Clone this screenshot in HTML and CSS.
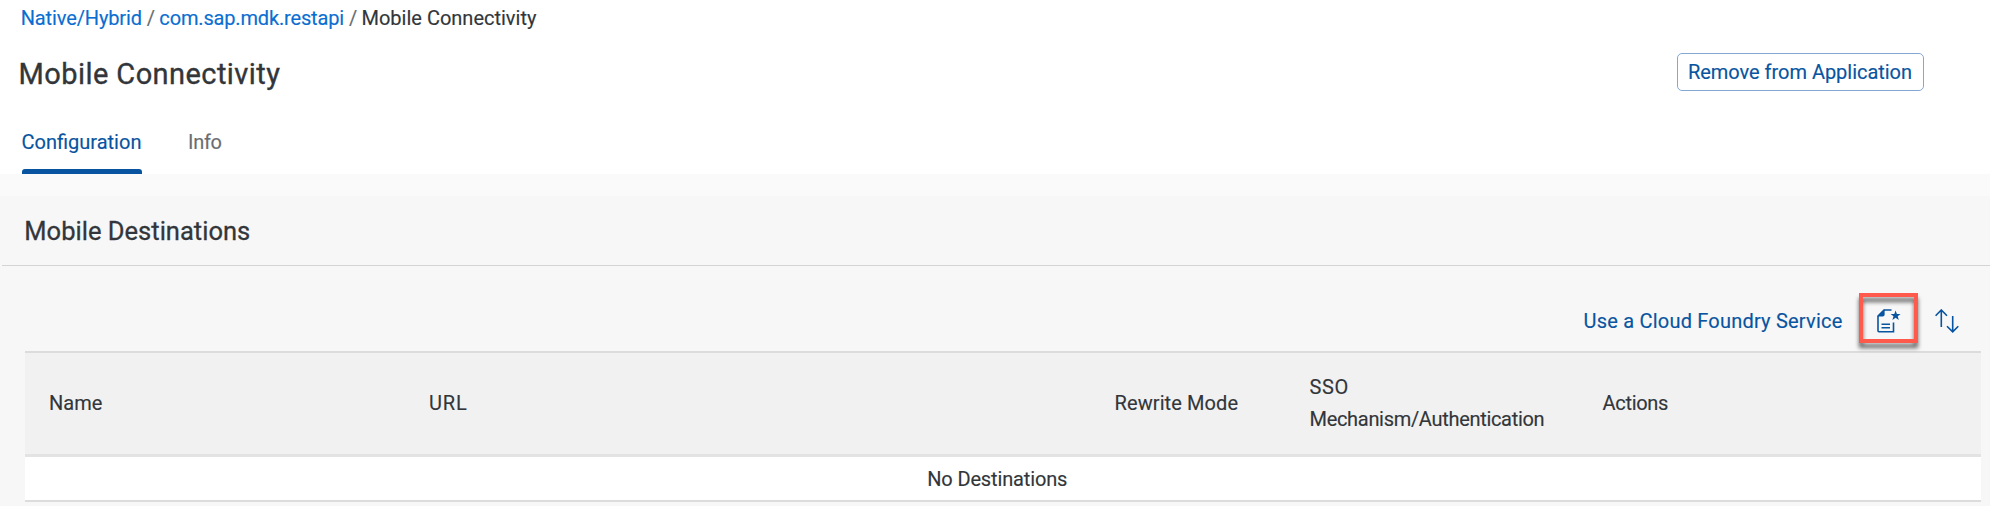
FILE: index.html
```
<!DOCTYPE html>
<html lang="en">
<head>
<meta charset="utf-8">
<title>Mobile Connectivity</title>
<link rel="stylesheet" href="styles.css">
</head>
<body>
<header class="page-header">
  <nav class="crumbs">
    <a class="crumb-native">Native/Hybrid</a><span class="sep">/</span><a class="crumb-app">com.sap.mdk.restapi</a><span class="sep">/</span><span>Mobile Connectivity</span>
  </nav>
  <div class="title-row">
    <h1 class="title">Mobile Connectivity</h1>
    <button class="remove">Remove from Application</button>
  </div>
  <div class="tabs">
    <a class="tab active">Configuration</a>
    <a class="tab info">Info</a>
  </div>
</header>
<main class="section">
  <h2 class="section-title">Mobile Destinations</h2>
  <div class="toolbar">
    <a class="cloud">Use a Cloud Foundry Service</a>
    <span class="create">
      <svg class="icon" viewBox="0 0 24 24" width="24" height="24">
        <path d="M14.5 1H7L1 7V21.8Q1 22.8 2 22.8H16.5V13.6" fill="none" stroke="currentColor" stroke-width="1.6"/>
        <path d="M7.6 .3V5.4Q7.6 7.4 5.6 7.4H.3z" fill="currentColor"/>
        <path d="M4.5 15.3H13M4.5 18.8H13" fill="none" stroke="currentColor" stroke-width="1.5"/>
        <path d="M18.6 1.6l1.3 3.4h3.7l-2.9 2.3 1.1 3.7-3.2-2.2-3.2 2.2 1.1-3.7-2.9-2.3h3.7z" fill="currentColor"/>
      </svg>
      <span class="highlight"></span>
    </span>
    <svg class="icon sort" viewBox="0 0 24 24" width="24" height="24">
      <path d="M.6 6.8L6.3 1 12 6.8M6.3 1V18M12 17.2L17.7 22.9l5.6-5.7M17.7 23V7" fill="none" stroke="currentColor" stroke-width="1.6"/>
    </svg>
  </div>
  <div class="table">
    <div class="head">
      <span>Name</span>
      <span class="url">URL</span>
      <span class="mode">Rewrite Mode</span>
      <span><span class="sso">SSO</span><br><span class="mech">Mechanism/Authentication</span></span>
      <span class="actions">Actions</span>
    </div>
    <div class="empty">No Destinations</div>
  </div>
</main>
</body>
</html>
```
FILE: styles.css
```
* { box-sizing: border-box; }
body {
  margin: 0;
  height: 506px;
  overflow: hidden;
  background: #f7f7f7;
  color: #32363a;
  font: 20px Roboto, sans-serif;
  white-space: nowrap;
  -webkit-text-stroke: .15px currentColor;
}
.page-header { background: #fff; height: 174px; }
.crumbs { height: 36px; line-height: 36px; padding-left: 20.7px; }
.crumbs a { color: #0a6ed1; }
.crumb-native { letter-spacing: -.13px; }
.crumb-app { letter-spacing: -.16px; }
.sep { display: inline-block; width: 17.5px; padding-left: 5px; color: #6a6d70; }
.title-row {
  display: flex;
  align-items: center;
  justify-content: space-between;
  height: 74px;
  padding: 0 66.5px 0 18.5px;
}
.title {
  margin: 2px 0 0;
  font-size: 29px;
  font-weight: 400;
  letter-spacing: .43px;
  -webkit-text-stroke: .35px currentColor;
}
.remove {
  width: 247px;
  height: 38px;
  margin-top: -2px;
  padding: 0;
  border: 1.5px solid #85a8d3;
  border-radius: 5px;
  background: #fff;
  color: #0854a0;
  font: inherit;
  letter-spacing: -.03px;
}
.tabs { display: flex; gap: 46.5px; height: 64px; padding-left: 21.5px; line-height: 64px; }
.tab { position: relative; color: #6a6d70; letter-spacing: -.3px; }
.active { color: #0854a0; width: 120px; letter-spacing: 0; }
.active::after {
  content: "";
  position: absolute;
  left: 0; right: 0; bottom: 0;
  height: 5px;
  border-radius: 3px 3px 0 0;
  background: #0854a0;
}
.section { border-top: 22px solid #fafafa; }
.section-title {
  margin: 0 0 0 2px;
  height: 70px;
  padding: 1px 0 0 22.3px;
  border-bottom: 1px solid #d4d4d4;
  font-size: 25.5px;
  font-weight: 400;
  letter-spacing: .02px;
  line-height: 68px;
  -webkit-text-stroke: .3px currentColor;
}
.toolbar {
  display: flex;
  align-items: center;
  justify-content: flex-end;
  height: 85px;
  padding: 25px 31px 0 0;
  color: #0854a0;
}
.cloud { letter-spacing: .21px; margin-right: 34.5px; }
.icon { display: block; }
.create { position: relative; margin-right: 34px; }
.highlight {
  position: absolute;
  left: -18px; top: -16px;
  width: 59px; height: 50px;
  border: 4px solid #ff5a4b;
  filter: drop-shadow(0 5px 2px rgba(0,0,0,.6));
}
.table { margin: 0 9px 0 25px; }
.head {
  display: grid;
  grid-template-columns: 380px 685.5px 195px 293px 1fr;
  align-items: center;
  height: 106px;
  padding: 0 0 1px 24px;
  border-top: 2px solid #dcdcdc;
  border-bottom: 3px solid #e3e3e3;
  background: #f1f1f1;
  line-height: 32px;
}
.url { letter-spacing: .85px; }
.mode { letter-spacing: .1px; }
.sso { letter-spacing: .6px; }
.mech { letter-spacing: -.31px; }
.actions { letter-spacing: -.3px; }
.empty {
  height: 45px;
  border-bottom: 2px solid #dcdcdc;
  background: #fff;
  text-align: center;
  line-height: 44px;
  letter-spacing: -.14px;
  padding-right: 11.5px;
}
```
